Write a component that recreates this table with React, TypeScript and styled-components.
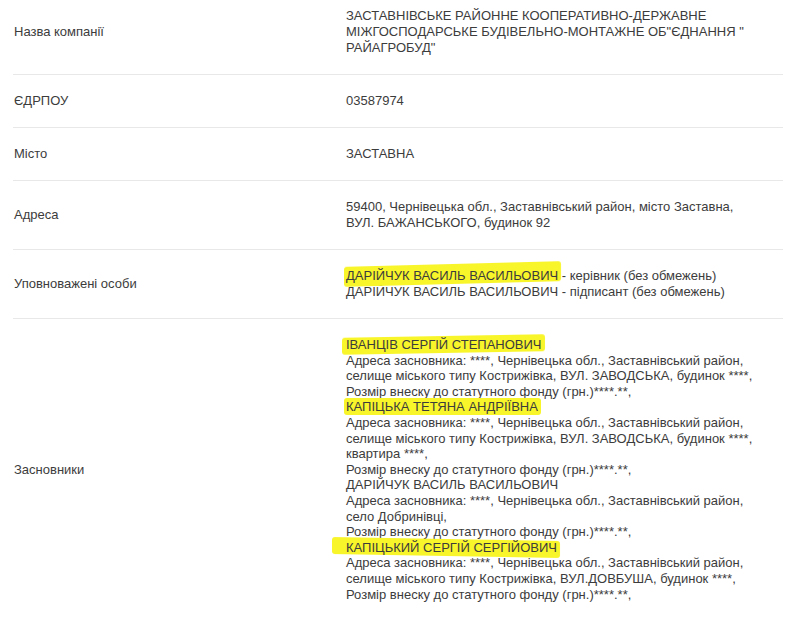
import React from "react";
import styled, { createGlobalStyle } from "styled-components";

const Global = createGlobalStyle`
  html, body { margin: 0; padding: 0; background: #ffffff; }
  body { font-family: "Liberation Sans", Arial, sans-serif; }
`;

const Table = styled.div`
  width: 770px;
  margin-left: 13px;
  margin-top: -10px;
  display: flex;
  flex-direction: column;
`;

const Row = styled.div<{ $last?: boolean }>`
  display: grid;
  grid-template-columns: 333px 1fr;
  align-items: center;
  padding: 18px 0;
  border-bottom: ${(p) => (p.$last ? "none" : "1px solid #e8e8e8")};
  color: #3c3c3c;
  font-size: 13px;
  line-height: 16px;
`;

const Label = styled.div`
  padding-left: 1px;
`;

const Value = styled.div<{ $tight?: boolean }>`
  display: flex;
  flex-direction: column;
  line-height: ${(p) => (p.$tight ? "15.6px" : "16px")};
`;

const Line = styled.span`
  white-space: nowrap;
`;

const Marker = styled.span<{ $skew?: number; $pad?: number; $top?: number }>`
  position: relative;
  z-index: 0;
  &::before {
    content: "";
    position: absolute;
    z-index: -1;
    left: ${(p) => -(p.$pad ?? 2)}px;
    right: -3px;
    top: ${(p) => -(p.$top ?? 1)}px;
    bottom: -1px;
    background: #f8f52a;
    border-radius: 3px;
    filter: blur(0.6px);
    transform: skewY(${(p) => p.$skew ?? 0}deg);
  }
`;

const Founder = styled.div`
  display: flex;
  flex-direction: column;
`;

type FounderData = {
  name: string;
  marked: boolean;
  skew?: number;
  pad?: number;
  address: string[];
};

const founders: FounderData[] = [
  {
    name: "ІВАНЦІВ СЕРГІЙ СТЕПАНОВИЧ",
    marked: true,
    skew: -1,
    pad: 4,
    address: [
      "Адреса засновника: ****, Чернівецька обл., Заставнівський район,",
      "селище міського типу Кострижівка, ВУЛ. ЗАВОДСЬКА, будинок ****,",
    ],
  },
  {
    name: "КАПІЦЬКА ТЕТЯНА АНДРІЇВНА",
    marked: true,
    skew: 0,
    pad: 2,
    address: [
      "Адреса засновника: ****, Чернівецька обл., Заставнівський район,",
      "селище міського типу Кострижівка, ВУЛ. ЗАВОДСЬКА, будинок ****,",
      "квартира ****,",
    ],
  },
  {
    name: "ДАРІЙЧУК ВАСИЛЬ ВАСИЛЬОВИЧ",
    marked: false,
    address: [
      "Адреса засновника: ****, Чернівецька обл., Заставнівський район,",
      "село Добринівці,",
    ],
  },
  {
    name: "КАПІЦЬКИЙ СЕРГІЙ СЕРГІЙОВИЧ",
    marked: true,
    skew: 1,
    pad: 14,
    address: [
      "Адреса засновника: ****, Чернівецька обл., Заставнівський район,",
      "селище міського типу Кострижівка, ВУЛ.ДОВБУША, будинок ****,",
    ],
  },
];

export default function App() {
  return (
    <>
      <Global />
      <Table>
        <Row>
          <Label>Назва компанії</Label>
          <Value>
            <Line>ЗАСТАВНІВСЬКЕ РАЙОННЕ КООПЕРАТИВНО-ДЕРЖАВНЕ</Line>
            <Line>МІЖГОСПОДАРСЬКЕ БУДІВЕЛЬНО-МОНТАЖНЕ ОБ"ЄДНАННЯ "</Line>
            <Line>РАЙАГРОБУД"</Line>
          </Value>
        </Row>
        <Row>
          <Label>ЄДРПОУ</Label>
          <Value>
            <Line>03587974</Line>
          </Value>
        </Row>
        <Row>
          <Label>Місто</Label>
          <Value>
            <Line>ЗАСТАВНА</Line>
          </Value>
        </Row>
        <Row>
          <Label>Адреса</Label>
          <Value>
            <Line>59400, Чернівецька обл., Заставнівський район, місто Заставна,</Line>
            <Line>ВУЛ. БАЖАНСЬКОГО, будинок 92</Line>
          </Value>
        </Row>
        <Row>
          <Label>Уповноважені особи</Label>
          <Value>
            <Line>
              <Marker $skew={-1.5} $pad={2} $top={4}>ДАРІЙЧУК ВАСИЛЬ ВАСИЛЬОВИЧ</Marker> - керівник (без обмежень)
            </Line>
            <Line>ДАРІЙЧУК ВАСИЛЬ ВАСИЛЬОВИЧ - підписант (без обмежень)</Line>
          </Value>
        </Row>
        <Row $last>
          <Label>Засновники</Label>
          <Value $tight>
            {founders.map((f) => (
              <Founder key={f.name}>
                <Line>
                  {f.marked ? (
                    <Marker $skew={f.skew} $pad={f.pad}>
                      {f.name}
                    </Marker>
                  ) : (
                    f.name
                  )}
                </Line>
                {f.address.map((a) => (
                  <Line key={a}>{a}</Line>
                ))}
                <Line>Розмір внеску до статутного фонду (грн.)****.**,</Line>
              </Founder>
            ))}
          </Value>
        </Row>
      </Table>
    </>
  );
}
